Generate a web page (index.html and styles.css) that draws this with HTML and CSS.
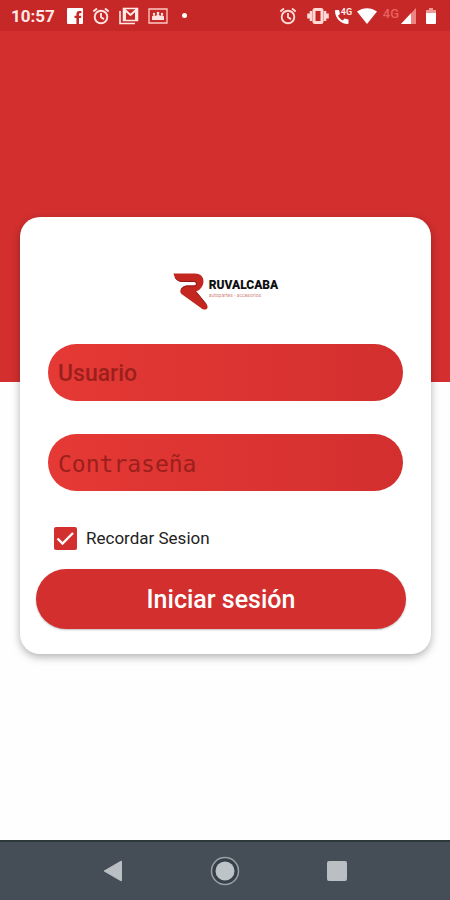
FILE: index.html
```html
<!DOCTYPE html>
<html lang="es">
  <head>
    <meta charset="UTF-8" />
    <meta name="viewport" content="width=device-width, initial-scale=1.0" />
    <title>Ruvalcaba - Iniciar sesión</title>
    <link rel="stylesheet" href="styles.css">
  </head>
  <body>
    <header class="status-bar">
      <span class="time">10:57</span>
      <div class="status-left">
        <svg width="16" height="16" viewBox="0 0 16 16">
          <path fill="#fff" d="M1 0h14a1 1 0 0 1 1 1v14a1 1 0 0 1-1 1h-3v-6h2l.4-2.300H12V6.500c0-.8.300-1.200 1.200-1.200h1.200V3.100h-2c-2 0-3 1.100-3 3v1.600H7.500V10h1.900v6H1a1 1 0 0 1-1-1V1a1 1 0 0 1 1-1z" />
        </svg>
        <svg width="18" height="18" viewBox="0 0 18 18" fill="none" stroke="#ffe3e0" stroke-width="1.900">
          <circle cx="9" cy="10" r="6.300" />
          <path d="M1.300 4.600 5 1.500M16.700 4.600 13 1.500M9 6v4.300l3 1.800" />
        </svg>
        <svg width="20" height="18" viewBox="0 0 20 18" fill="none" stroke="#ffe9e6">
          <path stroke-width="1.600" d="M1 4v12.500h15" />
          <path stroke-width="1.500" d="M4.500 1.500h14v12h-14z" />
          <path stroke-width="2" d="M6 13V3l5.500 5L17 3v10" />
        </svg>
        <svg width="20" height="16" viewBox="0 0 20 16">
          <path fill="none" stroke="#ffc9c4" stroke-width="1.300" d="M1 1h18v14H1z" />
          <path fill="#ffe3e0" d="M4 11V8.500l2-1.500 2 1 2-3 2 3 2-1 2 1.500V11zM4 11h12v1H4z" />
          <circle cx="6" cy="6" r="1.200" fill="#ffe3e0" />
          <circle cx="10" cy="5" r="1.300" fill="#ffe3e0" />
          <circle cx="14" cy="6" r="1.200" fill="#ffe3e0" />
        </svg>
        <span class="dot"></span>
      </div>
      <div class="status-right">
        <svg width="18" height="18" viewBox="0 0 18 18" fill="none" stroke="#ffd9d5" stroke-width="1.900">
          <circle cx="9" cy="10" r="6.300" />
          <path d="M1.300 4.600 5 1.500M16.700 4.600 13 1.500M9 6v4.300l3 1.800" />
        </svg>
        <svg class="vibrate" width="22" height="16" viewBox="0 0 22 16" fill="none" stroke="#ffd9d5">
          <rect x="7" y="1.500" width="8" height="13" rx="1" stroke-width="3" />
          <path stroke-width="2.600" d="M4 3v10M18 3v10M1.500 5.500v5M20.500 5.500v5" />
        </svg>
        <div class="call">
          <svg width="16" height="16" viewBox="0 0 16 16">
            <path fill="#fff" d="M1 2h3l1 4-2 1.700c1 2.200 2.700 3.800 4.800 4.800l1.700-2 4 1V15c0 .6-.4 1-1 1C6 16 0 10 0 3c0-.6.400-1 1-1z" />
          </svg>
          <span class="call-type">4G</span>
        </div>
        <svg width="20" height="16" viewBox="0 0 20 16">
          <path fill="#fff" d="M0 3.500C6-1 14-1 20 3.500L10 16z" />
        </svg>
        <span class="network">4G</span>
        <svg width="15" height="16" viewBox="0 0 15 16">
          <path fill="#ee8582" d="M15 0v16H0z" />
          <path fill="#fff" d="M10 5.300V16H0z" />
        </svg>
        <svg class="battery" width="10" height="16" viewBox="0 0 10 16">
          <path fill="#ee9b98" d="M3 0h4v2h3v4H0V2h3z" />
          <path fill="#fff" d="M0 5h10v10a1 1 0 0 1-1 1H1a1 1 0 0 1-1-1z" />
        </svg>
      </div>
    </header>

    <main class="content">
      <form class="card">
        <div class="logo">
          <svg width="36" height="38" viewBox="0 0 36 38">
            <path fill="#c3271f" d="M.5 1.500H22c5 0 8.500 3 8.500 7.500 0 5-3 9-7.500 10.500l11 13.500c1.500 2.500 0 4.500-2 4.500-1.500 0-3-.5-4-1.500L8.500 22c-2-2-1.500-4.500.5-6.500 2-1.500 3.500-2 6-2h6c2.500 0 2.500-3.500 0-3.500H9C4.500 9.500 1.500 6 .5 1.500z" />
            <path fill="none" stroke="#8e1914" stroke-width="1" d="M2 5.500C3.500 8 6 9.500 9 9.500h12.500c3 0 3 4.500 0 4.500H15c-3 0-5 1-6.500 3M23 19.500l10.500 13" />
          </svg>
          <div class="logo-text">
            <span class="logo-name">RUVALCABA</span>
            <span class="logo-tagline">autopartes - accesorios</span>
          </div>
        </div>
        <input class="field" type="text" name="usuario" placeholder="Usuario" aria-label="Usuario" />
        <input class="field field-password" type="password" name="password" placeholder="Contraseña" aria-label="Contraseña" />
        <label class="remember">
          <input type="checkbox" name="recordar" checked />
          <svg class="tick" width="23" height="23" viewBox="0 0 23 23">
            <rect width="23" height="23" rx="2" fill="#d32f2f" />
            <path fill="none" stroke="#fff" stroke-width="2.400" d="M3.500 11.500 8.500 16.500 19 6" />
          </svg>
          Recordar Sesion
        </label>
        <button type="submit">Iniciar sesión</button>
      </form>
    </main>

    <nav class="nav-bar">
      <button type="button" aria-label="Atrás">
        <svg width="30" height="30" viewBox="0 0 30 30">
          <path fill="#b9bfc3" d="M24 5.500v19a1 1 0 0 1-1.500.5L7 16a1 1 0 0 1 0-2l15.500-9a1 1 0 0 1 1.500.5z" />
        </svg>
      </button>
      <button type="button" aria-label="Inicio">
        <svg width="30" height="30" viewBox="0 0 30 30">
          <circle cx="15" cy="15" r="13.500" fill="#36404a" stroke="#9aa1a6" stroke-width="1.500" />
          <circle cx="15" cy="15" r="9.500" fill="#bdc4c7" />
        </svg>
      </button>
      <button type="button" aria-label="Recientes">
        <svg width="30" height="30" viewBox="0 0 30 30">
          <rect x="5" y="5" width="20" height="20" rx="2" fill="#b9bfc3" />
        </svg>
      </button>
    </nav>
  </body>
</html>
```

FILE: styles.css
```css
* {
  box-sizing: border-box;
}

body {
  margin: 0;
  min-height: 100vh;
  display: flex;
  flex-direction: column;
  font-family: Roboto, "Liberation Sans", sans-serif;
  background: #fefefe linear-gradient(#d32f2f, #d32f2f) no-repeat top / 100% 382px;
}

.status-bar {
  display: flex;
  align-items: center;
  height: 31px;
  padding: 0 14px 0 11px;
  background-color: #c62828;
  color: #ffe9e6;
}

.time {
  font-size: 17px;
  font-weight: 700;
}

.status-left,
.status-right {
  display: flex;
  align-items: center;
  gap: 9px;
}

.status-left {
  margin-left: 12px;
}

.status-right {
  margin-left: auto;
  gap: 6px;
}

.dot {
  width: 5px;
  height: 5px;
  margin-left: 5px;
  border-radius: 50%;
  background-color: #fff;
}

.vibrate {
  margin-left: 4px;
}

.call {
  position: relative;
  display: flex;
}

.call-type {
  position: absolute;
  top: -1px;
  left: 6px;
  font-size: 9px;
  line-height: 10px;
  font-weight: 700;
}

.network {
  align-self: flex-start;
  font-size: 13px;
  line-height: 14px;
  font-weight: 500;
  color: #e8615f;
}

.status-right .network + svg {
  margin-left: -4px;
}

.battery {
  margin-left: 4px;
}

.content {
  flex: 1;
  padding: 186px 19px 24px 20px;
}

.card {
  display: flex;
  flex-direction: column;
  padding: 55px 28px 25px;
  border-radius: 20px;
  background-color: #fff;
  box-shadow: 0 3px 8px rgba(0, 0, 0, 0.3);
}

.logo {
  display: flex;
  justify-content: center;
  height: 40px;
  margin-bottom: 32px;
}

.logo-text {
  display: flex;
  flex-direction: column;
  padding-top: 6px;
}

.logo-name {
  font-size: 12px;
  line-height: 14px;
  font-weight: 900;
  color: #111;
}

.logo-tagline {
  font-size: 5px;
  line-height: 6px;
  color: #d48a86;
}

.field {
  width: 100%;
  height: 57px;
  margin-bottom: 33px;
  padding: 2px 10px 0;
  border: none;
  border-radius: 29px;
  background-image: linear-gradient(90deg, #e53935, #d32f2f);
  color: #fff;
  font-family: Roboto, "Liberation Sans", sans-serif;
  font-size: 23px;
  font-weight: 500;
}

.field::placeholder {
  color: #9c1f1c;
  opacity: 1;
}

.field-password {
  font-family: "DejaVu Sans Mono", "Liberation Mono", monospace;
  font-weight: 400;
}

.remember {
  display: flex;
  align-items: center;
  gap: 9px;
  align-self: flex-start;
  margin: 3px 0 19px 6px;
  font-size: 17px;
  line-height: 23px;
  color: #222;
}

.remember input {
  position: absolute;
  opacity: 0;
}

.remember input:not(:checked) + .tick {
  opacity: 0.4;
}

.card button {
  height: 60px;
  margin: 0 -3px 0 -12px;
  border: none;
  border-radius: 30px;
  background-color: #d32f2f;
  box-shadow: 0 1px 2px rgba(0, 0, 0, 0.25);
  color: #fff;
  font-family: inherit;
  font-size: 25px;
  font-weight: 500;
  cursor: pointer;
}

.nav-bar {
  display: flex;
  justify-content: center;
  align-items: center;
  gap: 82px;
  height: 60px;
  border-top: 2px solid #2b3838;
  background-color: #454d56;
}

.nav-bar button {
  display: flex;
  padding: 0;
  border: none;
  background: none;
  cursor: pointer;
}
```
